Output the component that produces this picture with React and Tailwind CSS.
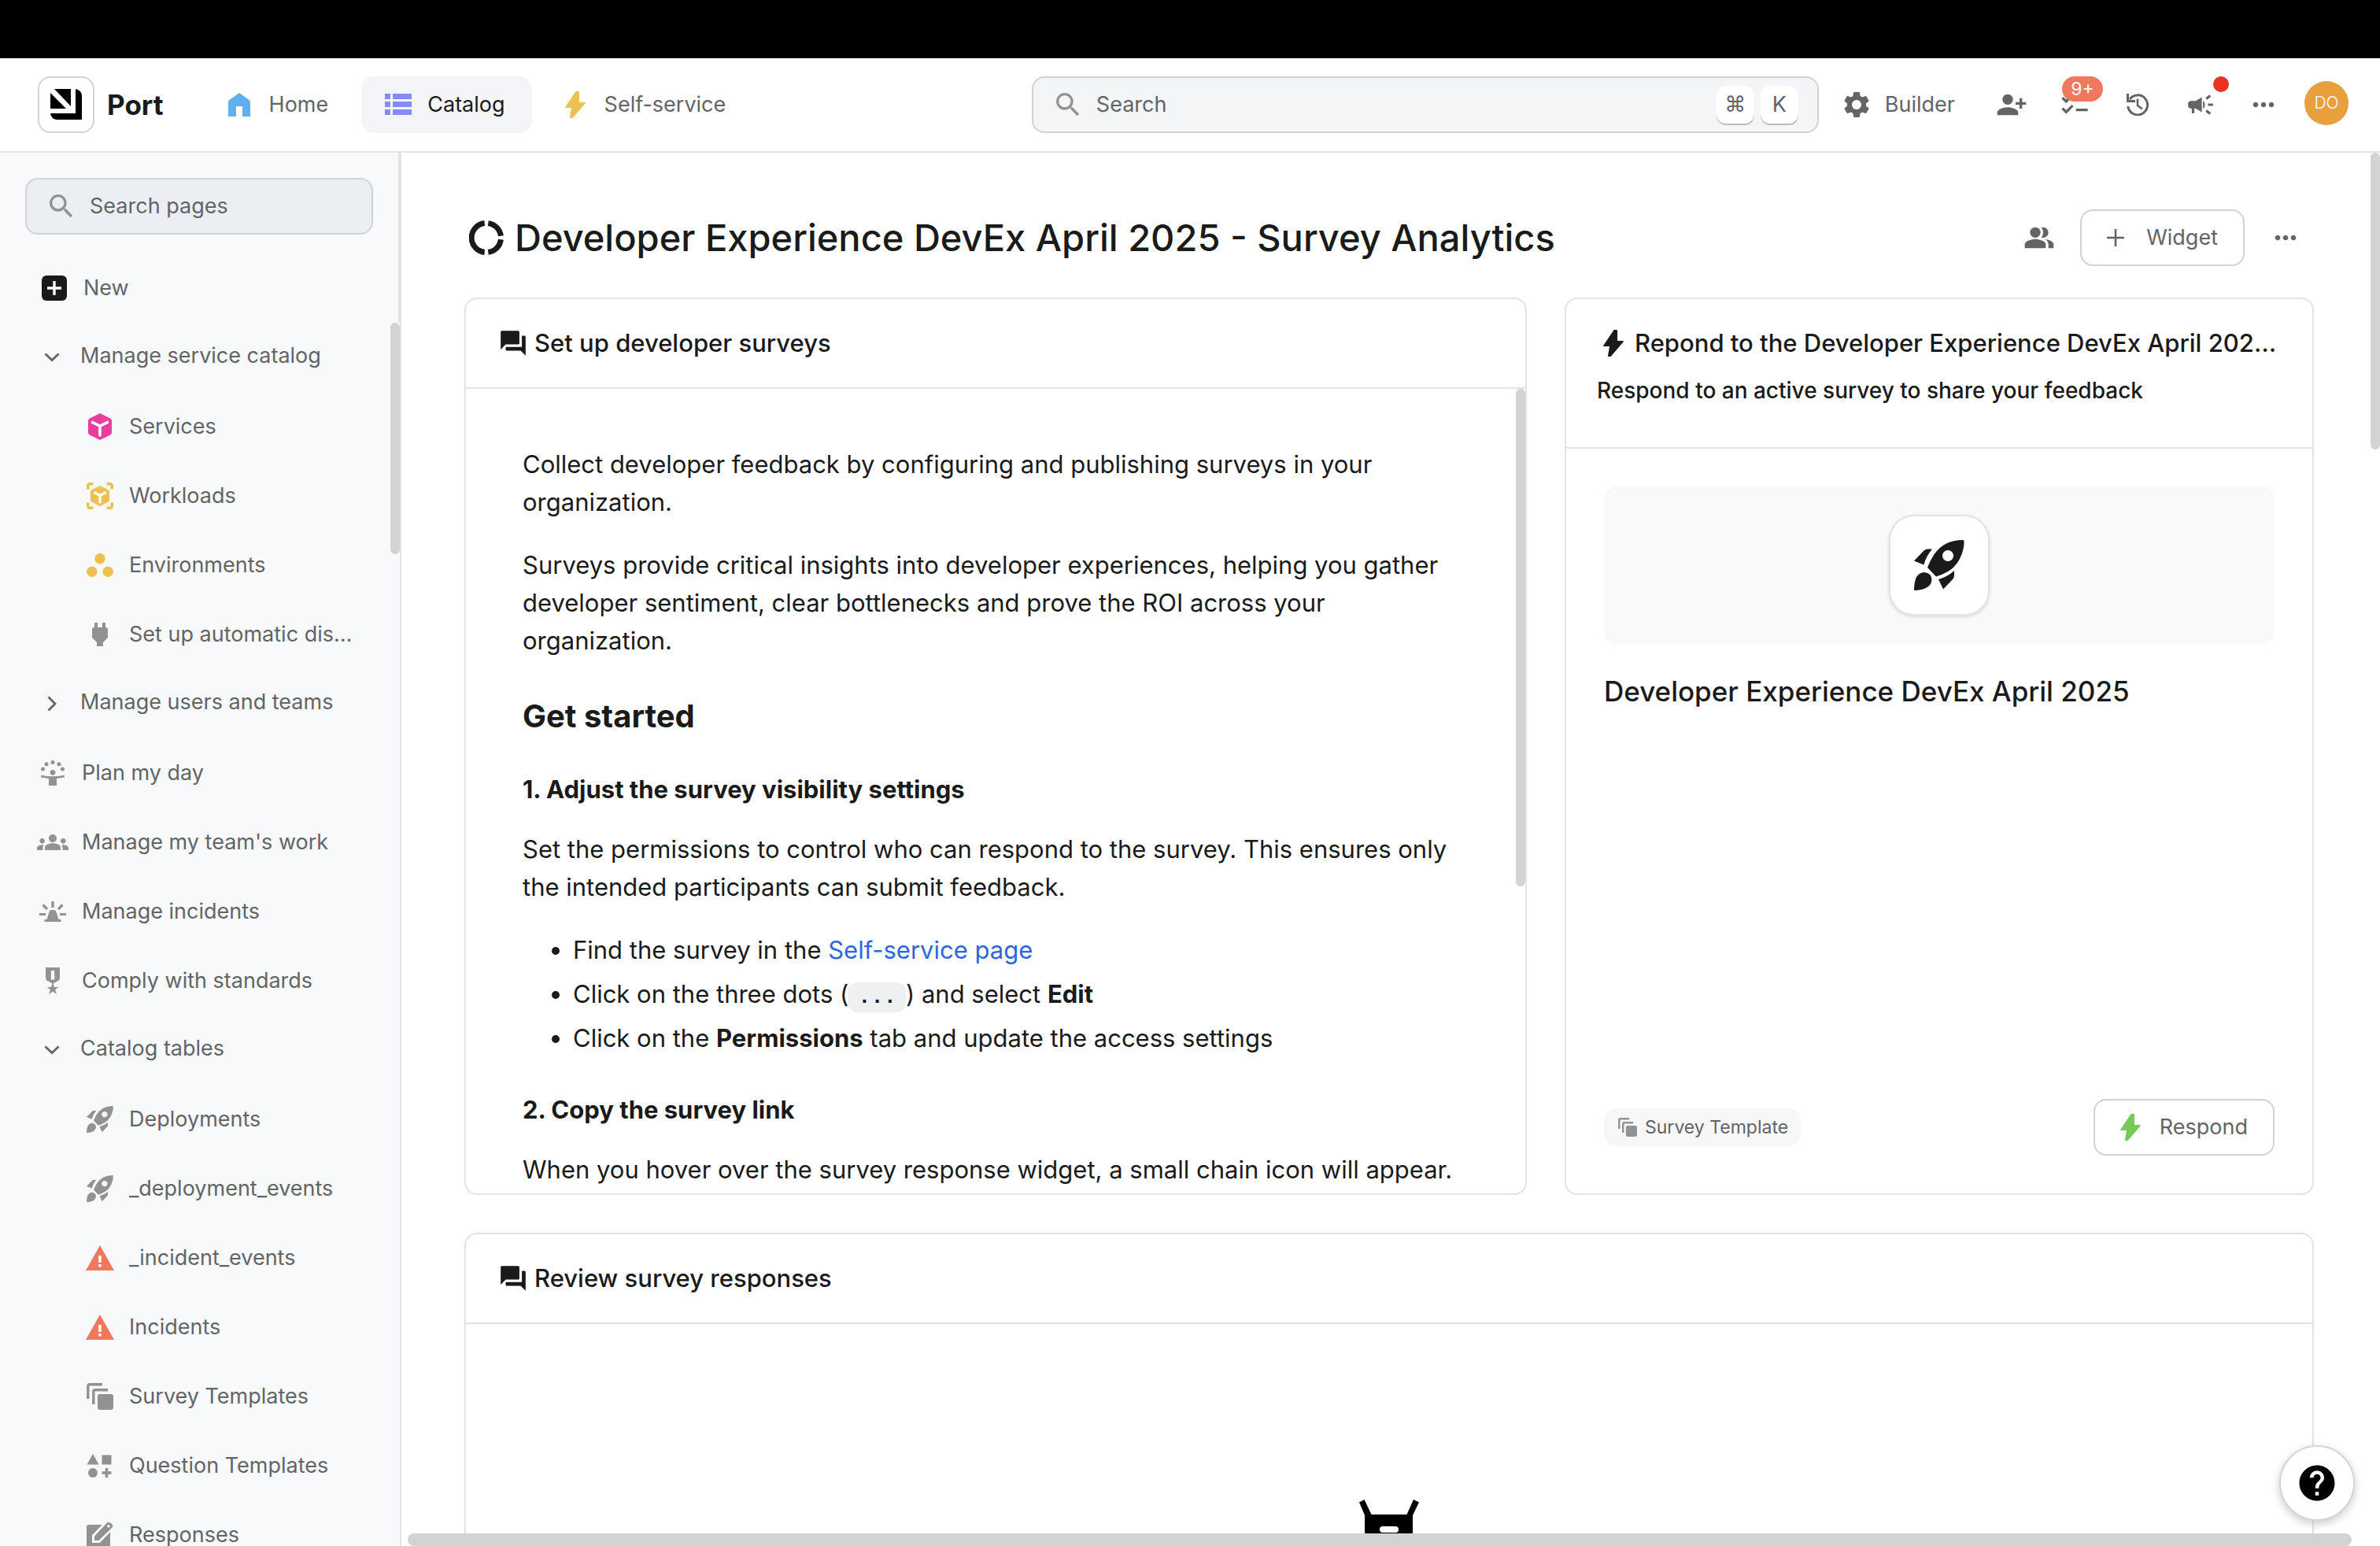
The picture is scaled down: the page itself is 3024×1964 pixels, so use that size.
import React from "react";
import {
  MdCampaign,
  MdChecklist,
  MdForum,
  MdGroups,
  MdHelp,
  MdMoreHoriz,
  MdPeopleAlt,
  MdPersonAddAlt1,
  MdSearch,
  MdSettings,
} from "react-icons/md";

/* ---------- icons ---------- */

const LogoIcon = () => (
  <svg width="40" height="40" viewBox="0 0 40 40" fill="#000" aria-hidden="true">
    <path d="M5 0h21v22z" />
    <path d="M0 5l20 20H0z" />
    <path d="M32 0q8 2 8 9v30H8q-7-1-8-8h32z" />
  </svg>
);

const HomeIcon = () => (
  <svg width="28" height="30" viewBox="0 0 28 30" fill="#5eb0ef" aria-hidden="true">
    <path d="M14 0l12.500 9q1.500 1 1.500 3v18H18V17h-8v13H0V12q0-2 1.500-3z" />
  </svg>
);

const ListIcon = () => (
  <svg width="34" height="28" viewBox="0 0 34 28" fill="#858af8" aria-hidden="true">
    {[0, 10, 20].map((y) => (
      <g key={y}>
        <rect y={y} width="7" height="7" />
        <rect x="10" y={y} width="24" height="7" />
      </g>
    ))}
  </svg>
);

const BoltIcon = ({ color, className = "" }) => (
  <svg width="26" height="34" viewBox="0 0 26 34" fill={color} className={className} aria-hidden="true">
    <path d="M13 1q0-1 1-1h3q1 0 1 1v13h7q1.500 0 .7 1.300L10.500 33q-.5 1-1.500 1H7q-1 0-1-1l2-12H1Q-.300 21 .300 19.700z" />
  </svg>
);

const HistoryIcon = () => (
  <svg width="28" height="28" viewBox="0 0 28 28" fill="none" stroke="currentColor" strokeWidth="3" aria-hidden="true">
    <path d="M1.700 16A12.500 12.500 0 1 0 4 7" />
    <path d="M1.500 0v9.500H11" />
    <path d="M14 6.500v8.500l6 4.500" strokeWidth="2.600" />
  </svg>
);

const PlusIcon = () => (
  <svg width="22" height="22" viewBox="0 0 22 22" stroke="currentColor" strokeWidth="2.600" aria-hidden="true">
    <path d="M11 0v22M0 11h22" />
  </svg>
);

const NewIcon = () => (
  <svg width="32" height="32" viewBox="0 0 32 32" aria-hidden="true">
    <rect width="32" height="32" rx="6" fill="#1a1a1a" />
    <path d="M16 7v18M7 16h18" stroke="#fff" strokeWidth="3.400" />
  </svg>
);

const ChevronDown = () => (
  <svg width="20" height="12" viewBox="0 0 20 12" fill="none" stroke="#636466" strokeWidth="2.800" aria-hidden="true">
    <path d="M1.500 1.500l8.500 8 8.500-8" />
  </svg>
);

const ChevronRight = () => (
  <svg width="12" height="20" viewBox="0 0 12 20" fill="none" stroke="#636466" strokeWidth="2.800" aria-hidden="true">
    <path d="M1.500 1.500l8.500 8.500-8.500 8.500" />
  </svg>
);

const CubeIcon = () => (
  <svg width="30" height="34" viewBox="0 0 30 34" aria-hidden="true">
    <path d="M15 0l13 6.500q2 1 2 3v15q0 2-2 3L15 34 2 27.500q-2-1-2-3v-15q0-2 2-3z" fill="#e93d9f" />
    <path d="M5.500 11.500L15 16.300l9.500-4.800M15 16.300V28" fill="none" stroke="#fff" strokeWidth="3.600" strokeLinecap="round" />
  </svg>
);

const WorkloadIcon = () => (
  <svg width="34" height="34" viewBox="0 0 34 34" aria-hidden="true">
    <g fill="none" stroke="#edc151" strokeWidth="3.600">
      <path d="M1.800 8.500V4Q1.800 1.800 4 1.800h4.500M25.500 1.800H30q2.200 0 2.200 2.200v4.500M32.200 25.500V30q0 2.200-2.200 2.200h-4.500M8.500 32.200H4q-2.200 0-2.200-2.200v-4.500" />
    </g>
    <path d="M17 4l10.500 5.300q1.500.7 1.500 2v11.400q0 1.300-1.500 2L17 30 6.500 24.700q-1.500-.7-1.500-2V11.300q0-1.300 1.500-2z" fill="#edc151" />
    <path d="M10.500 13l6.500 3.400 6.500-3.400M17 16.400V25" fill="none" stroke="#fff" strokeWidth="3.200" strokeLinecap="round" />
  </svg>
);

const DotsIcon = () => (
  <svg width="34" height="30" viewBox="0 0 34 30" fill="#edc151" aria-hidden="true">
    <circle cx="17" cy="6.700" r="6.700" />
    <circle cx="6.800" cy="23.200" r="6.700" />
    <circle cx="27.200" cy="23.200" r="6.700" />
  </svg>
);

const PlugIcon = () => (
  <svg width="20" height="30" viewBox="0 0 20 30" fill="#919294" aria-hidden="true">
    <path d="M3 0h4v6h6V0h4v6q3 0 3 3v10l-6 6v5H6v-5l-6-6V9q0-3 3-3z" />
  </svg>
);

const JuggleIcon = () => (
  <svg width="30" height="32" viewBox="0 0 30 32" fill="#919294" aria-hidden="true">
    <circle cx="15" cy="2.500" r="2.500" />
    <circle cx="7" cy="4.800" r="2.500" />
    <circle cx="23" cy="4.800" r="2.500" />
    <circle cx="2.500" cy="11" r="2.500" />
    <circle cx="27.500" cy="11" r="2.500" />
    <circle cx="15" cy="15.300" r="3.400" />
    <path d="M.5 18.800q14.500 3 29 0l.5 2.800q-5 1-10 1.400v9H10v-9q-5-.4-10-1.400z" />
  </svg>
);

const SirenIcon = () => (
  <svg width="34" height="26" viewBox="0 0 34 26" fill="#919294" aria-hidden="true">
    <path d="M9.500 23l3-9.500Q13 11 15 11h4q2 0 2.500 2.500l3 9.500z" />
    <path d="M6.500 23h21v3h-21zM0 15h8v3H0zM26 15h8v3h-8zM15.300 0h3.400v8h-3.400z" />
    <path d="M4.500 4.500l5.500 5.500M29.500 4.500L24 10" stroke="#919294" strokeWidth="3.200" />
  </svg>
);

const MedalIcon = () => (
  <svg width="18" height="34" viewBox="0 0 18 34" fill="#919294" aria-hidden="true">
    <path fillRule="evenodd" d="M0 0h18v13q0 3-3 4.500L10 20v3H8v-3l-5-2.500Q0 16 0 13zM6.800 4v11.500h4.400V4z" />
    <path d="M9 20l2 5h5.500l-4.400 3.300L14 34l-5-3.500L4 34l1.900-5.700L1.500 25H7z" />
  </svg>
);

const RocketIcon = ({ size = 34, color = "#919294" }) => (
  <svg width={size} height={size} viewBox="0 0 64 64" fill={color} aria-hidden="true">
    <path fillRule="evenodd" d="M62 0q1.500 0 1.500 1.500Q64 12 58 24 52 35 43 40 36 44 28 46.500L17 35q3-8 8-16Q31 10 40 5 50 0 62 0zM43 13a7 7 0 1 0 .01 0z" />
    <path d="M0 26.500L12 14q2.500-3 6-2.500h5Q15 21 12.400 31.500z" />
    <path d="M31 50q11-3 20-11v6q0 3-2 5L37 62.500z" />
    <path d="M0 64q0-11 3-17 4-6 10-6 9 1 9.500 9-.5 8-7.500 11-6 3-15 3z" />
  </svg>
);

const WarnIcon = () => (
  <svg width="36" height="32" viewBox="0 0 36 32" aria-hidden="true">
    <path d="M18 0l18 32H0z" fill="#ef785d" />
    <path d="M16.200 13h3.600v9h-3.600zM16.200 24h3.600v3.400h-3.600z" fill="#fff" />
  </svg>
);

const StackIcon = ({ size = 34 }) => (
  <svg width={size} height={size} viewBox="0 0 34 34" aria-hidden="true">
    <path d="M1.800 20V4Q1.800 1.800 4 1.800h16M8.800 27V11q0-2.200 2.200-2.200h16" fill="none" stroke="#919294" strokeWidth="3.400" />
    <rect x="14" y="14" width="20" height="20" rx="3" fill="#919294" />
  </svg>
);

const ShapesIcon = () => (
  <svg width="34" height="30" viewBox="0 0 34 30" fill="#919294" aria-hidden="true">
    <path d="M8 0l7.500 13.500H.5zM19.500 1.500h12v12h-12zM23.700 18h3.600v4.200h4.200v3.600h-4.200V30h-3.600v-4.200h-4.200v-3.600h4.200z" />
    <circle cx="8" cy="24" r="6" />
  </svg>
);

const EditIcon = () => (
  <svg width="34" height="34" viewBox="0 0 34 34" fill="#919294" aria-hidden="true">
    <rect y="4" width="30" height="30" rx="3" />
    <path d="M10 24v-5.500L25 3q2.500-2 5 .5t.5 5L15.500 24z" fill="#f8f9fb" stroke="#f8f9fb" strokeWidth="6" />
    <path d="M10 24v-5.500L25 2.500Q28-1 31.500 2.500T31.500 8.500L15.500 24z" />
    <circle cx="28" cy="5.800" r="1.800" fill="#f8f9fb" />
  </svg>
);

const DonutIcon = () => (
  <svg width="44" height="44" viewBox="0 0 44 44" fill="none" stroke="#1a1a1a" strokeWidth="7" aria-hidden="true">
    <path d="M19.700 3.600a18.500 18.500 0 0 0 0 36.800M24.300 3.600A18.500 18.500 0 0 1 40.400 19.700M40.400 24.300A18.500 18.500 0 0 1 24.300 40.400" />
  </svg>
);

const MascotIcon = () => (
  <svg width="76" height="120" viewBox="0 0 76 120" aria-hidden="true">
    <path d="M0 3.500L6.500 0 15.500 19h45L69 0l7 3.500L68 20v100H7V20z" fill="#000" />
    <rect x="26" y="34" width="24" height="8" rx="4" fill="#fff" />
  </svg>
);

/* ---------- data ---------- */

const pages = [
  { type: "group", label: "Manage service catalog", open: true },
  { type: "child", label: "Services", icon: <CubeIcon /> },
  { type: "child", label: "Workloads", icon: <WorkloadIcon /> },
  { type: "child", label: "Environments", icon: <DotsIcon /> },
  { type: "child", label: "Set up automatic discovery", icon: <PlugIcon /> },
  { type: "group", label: "Manage users and teams", open: false },
  { type: "page", label: "Plan my day", icon: <JuggleIcon /> },
  { type: "page", label: "Manage my team's work", icon: <MdGroups size={40} color="#919294" /> },
  { type: "page", label: "Manage incidents", icon: <SirenIcon /> },
  { type: "page", label: "Comply with standards", icon: <MedalIcon /> },
  { type: "group", label: "Catalog tables", open: true },
  { type: "child", label: "Deployments", icon: <RocketIcon /> },
  { type: "child", label: "_deployment_events", icon: <RocketIcon /> },
  { type: "child", label: "_incident_events", icon: <WarnIcon /> },
  { type: "child", label: "Incidents", icon: <WarnIcon /> },
  { type: "child", label: "Survey Templates", icon: <StackIcon /> },
  { type: "child", label: "Question Templates", icon: <ShapesIcon /> },
  { type: "child", label: "Responses", icon: <EditIcon /> },
];

/* ---------- layout parts ---------- */

function NavLink({ icon, label, active }) {
  return (
    <a
      href="#"
      className={
        active
          ? "flex h-[72px] items-center gap-5 rounded-2xl bg-[#f4f5f8] pr-[34px] pl-[30px] text-[#1a1a1a]"
          : "flex h-[72px] items-center gap-6 rounded-2xl px-[30px]"
      }
    >
      {icon}
      {label}
    </a>
  );
}

function IconButton({ label, children }) {
  return (
    <button type="button" aria-label={label} className="relative flex h-[72px] w-20 items-center justify-center">
      {children}
    </button>
  );
}

function Header() {
  return (
    <header className="flex h-[120px] shrink-0 items-center border-b-2 border-[#e2e3e3] bg-white pr-7 pl-12">
      <a href="#" className="flex items-center gap-4 text-[35px] font-bold text-[#1a1a1a]">
        <span className="flex size-[72px] items-center justify-center rounded-2xl border-2 border-[#d4d4d4]">
          <LogoIcon />
        </span>
        Port
      </a>
      <nav className="ml-[52px] flex items-center gap-3">
        <NavLink icon={<HomeIcon />} label="Home" />
        <NavLink icon={<ListIcon />} label="Catalog" active />
        <NavLink icon={<BoltIcon color="#edc151" />} label="Self-service" />
      </nav>
      <div className="ml-auto flex items-center">
        <div className="flex h-[72px] w-[1000px] items-center gap-4 rounded-2xl border-2 border-[#d2d2d2] bg-[#f4f5f7] px-6">
          <MdSearch size={40} color="#919294" />
          <input
            type="text"
            aria-label="Search"
            placeholder="Search"
            className="min-w-0 flex-1 bg-transparent outline-none placeholder:text-[#636466]"
          />
          <span className="flex gap-2">
            <kbd className="flex size-12 items-center justify-center rounded-xl bg-white font-['DejaVu_Sans',sans-serif] text-[27px] shadow-[0_2px_0_#bbbcbe]">
              ⌘
            </kbd>
            <kbd className="flex size-12 items-center justify-center rounded-xl bg-white font-[Inter,sans-serif] text-[27px] shadow-[0_2px_0_#bbbcbe]">
              K
            </kbd>
          </span>
        </div>
        <button type="button" className="ml-7 flex h-[72px] items-center gap-4 pr-8">
          <MdSettings size={40} />
          Builder
        </button>
        <IconButton label="Invite member">
          <MdPersonAddAlt1 size={40} />
        </IconButton>
        <IconButton label="Tasks">
          <MdChecklist size={40} />
          <span className="absolute top-0 left-6 flex h-8 w-[52px] items-center justify-center rounded-full bg-[#ef785d] text-[23px] text-white">
            9+
          </span>
        </IconButton>
        <IconButton label="History">
          <HistoryIcon />
        </IconButton>
        <IconButton label="Announcements">
          <MdCampaign size={38} />
          <span className="absolute top-0 right-1 size-5 rounded-full bg-[#ea3323]" />
        </IconButton>
        <IconButton label="More">
          <MdMoreHoriz size={40} />
        </IconButton>
        <button type="button" aria-label="Account" className="flex w-20 justify-center pb-1">
          <span className="flex size-14 items-center justify-center rounded-full bg-[#e8a03c] text-[21px] font-light text-white">DO</span>
        </button>
      </div>
    </header>
  );
}

function SidebarRow({ item }) {
  if (item.type === "group") {
    return (
      <button type="button" aria-expanded={item.open} className="flex h-[88px] items-center gap-[26px] pr-8 pl-14 text-left">
        <span className="flex w-5 justify-center">{item.open ? <ChevronDown /> : <ChevronRight />}</span>
        <span className="truncate pb-1">{item.label}</span>
      </button>
    );
  }
  return (
    <a
      href="#"
      className={item.type === "child" ? "flex h-[88px] items-center gap-[17px] pr-14 pl-[107px]" : "flex h-[88px] items-center gap-[17px] pr-8 pl-[47px]"}
    >
      <span className="flex w-10 shrink-0 justify-center">{item.icon}</span>
      <span className="truncate">{item.label}</span>
    </a>
  );
}

function Sidebar() {
  return (
    <aside className="relative flex w-[510px] shrink-0 flex-col border-r-2 border-[#e2e3e3] bg-[#f8f9fb]">
      <div className="flex h-[216px] shrink-0 flex-col justify-between border-r-2 border-[#e2e3e3] pt-8">
        <div className="mr-8 ml-8 flex h-[72px] items-center gap-4 rounded-2xl border-2 border-[#d2d2d2] bg-[#ebeff3] px-6">
          <MdSearch size={40} color="#919294" />
          <input
            type="text"
            aria-label="Search pages"
            placeholder="Search pages"
            className="min-w-0 flex-1 bg-transparent outline-none placeholder:text-[#636466]"
          />
        </div>
        <button type="button" className="flex h-[88px] items-center gap-[21px] pl-[53px]">
          <NewIcon />
          New
        </button>
      </div>
      <nav className="relative flex min-h-0 flex-1 flex-col overflow-hidden">
        {pages.map((item) => (
          <div key={item.label} className="flex shrink-0 flex-col">
            <SidebarRow item={item} />
          </div>
        ))}
        <span className="absolute top-0 right-0 h-[294px] w-3 rounded-full bg-[#d3d3d3]" />
      </nav>
    </aside>
  );
}

function CardTitle({ children }) {
  return (
    <header className="flex h-[114px] shrink-0 items-center gap-2 border-b-2 border-[#e2e3e3] px-[41px] text-[31px] font-medium">
      <MdForum size={38} />
      <h2>{children}</h2>
    </header>
  );
}

const cardClass = "flex flex-col overflow-hidden rounded-2xl border-2 border-[#e2e3e3] bg-white";

function SetupCard() {
  return (
    <section className={cardClass}>
      <CardTitle>Set up developer surveys</CardTitle>
      <div className="relative min-h-0 flex-1 overflow-hidden pt-[72px] pr-[84px] pl-[72px] text-[31px] leading-[48px]">
        <p>Collect developer feedback by configuring and publishing surveys in your organization.</p>
        <p className="mt-8">
          Surveys provide critical insights into developer experiences, helping you gather developer sentiment, clear
          bottlenecks and prove the ROI across your organization.
        </p>
        <h3 className="mt-12 text-[40px] font-bold">Get started</h3>
        <h4 className="mt-[45px] font-bold">1. Adjust the survey visibility settings</h4>
        <p className="mt-7">
          Set the permissions to control who can respond to the survey. This ensures only the intended participants can
          submit feedback.
        </p>
        <ul className="mt-8 flex list-disc flex-col gap-2 pl-16">
          <li>
            Find the survey in the{" "}
            <a href="#" className="text-[#2e66dc]">
              Self-service page
            </a>
          </li>
          <li>
            Click on the three dots (
            <code className="rounded-xl bg-[#eff0f2] px-3 py-1 font-['Liberation_Mono',monospace] text-[27px] leading-none font-bold">...</code>
            ) and select <strong className="font-bold">Edit</strong>
          </li>
          <li>
            Click on the <strong className="font-bold">Permissions</strong> tab and update the access settings
          </li>
        </ul>
        <h4 className="mt-[43px] font-bold">2. Copy the survey link</h4>
        <p className="mt-7">When you hover over the survey response widget, a small chain icon will appear.</p>
        <span className="absolute top-0 right-0 h-[632px] w-3 rounded-full bg-[#d3d3d3]" />
      </div>
    </section>
  );
}

function RespondCard() {
  return (
    <section className={cardClass}>
      <header className="flex h-[190px] shrink-0 flex-col gap-5 border-b-2 border-[#e2e3e3] px-[39px] pt-8 font-medium">
        <div className="flex h-12 items-center gap-[14px] pl-2 text-[31px]">
          <BoltIcon color="#1a1a1a" className="shrink-0" />
          <h2 className="truncate">Repond to the Developer Experience DevEx April 2025 - Survey</h2>
        </div>
        <p className="text-[28px] leading-8">Respond to an active survey to share your feedback</p>
      </header>
      <div className="flex flex-1 flex-col px-12 py-12">
        <div className="flex h-[200px] shrink-0 items-center justify-center rounded-2xl bg-[#f8f9fb]">
          <span className="flex size-32 items-center justify-center rounded-[32px] border-2 border-[#e2e3e3] bg-white shadow-[0_2px_4px_rgba(0,0,0,0.12)]">
            <RocketIcon size={64} color="#1a1a1a" />
          </span>
        </div>
        <h3 className="mt-9 text-[35px] leading-[48px] font-medium">Developer Experience DevEx April 2025</h3>
        <div className="mt-auto flex items-center justify-between text-[#636466]">
          <span className="flex h-12 items-center gap-[10px] rounded-2xl bg-[#f7f7f7] pr-4 pl-[18px] text-[23px]">
            <StackIcon size={24} />
            Survey Template
          </span>
          <button type="button" className="flex h-[72px] items-center gap-6 rounded-2xl border-2 border-[#d2d2d2] px-8 text-[27px]">
            <BoltIcon color="#74c957" />
            Respond
          </button>
        </div>
      </div>
    </section>
  );
}

function ReviewCard() {
  return (
    <section className={`${cardClass} col-span-2`}>
      <CardTitle>Review survey responses</CardTitle>
      <div className="flex flex-1 justify-center pt-[223px]">
        <MascotIcon />
      </div>
    </section>
  );
}

export default function App() {
  return (
    <div className="flex h-screen flex-col overflow-hidden bg-white font-[Inter,sans-serif] text-[27px] text-[#636466]">
      <div className="h-[74px] shrink-0 bg-black" />
      <Header />
      <div className="flex min-h-0 flex-1">
        <Sidebar />
        <main className="relative min-w-0 flex-1 overflow-hidden pr-[84px] pl-20 text-[#1a1a1a]">
          <div className="flex h-[184px] items-center pt-8">
            <h1 className="flex items-center gap-[14px] pl-[6px] text-[47px] font-medium">
              <DonutIcon />
              Developer Experience DevEx April 2025 - Survey Analytics
            </h1>
            <div className="-mr-1 ml-auto flex items-center text-[#636466]">
              <IconButton label="Members">
                <MdPeopleAlt size={40} />
              </IconButton>
              <button type="button" className="mx-3 flex h-[72px] items-center gap-7 rounded-2xl border-2 border-[#d2d2d2] px-8">
                <PlusIcon />
                Widget
              </button>
              <IconButton label="More options">
                <MdMoreHoriz size={40} />
              </IconButton>
            </div>
          </div>
          <div className="grid grid-cols-[1350fr_952fr] grid-rows-[1140px_860px] gap-12">
            <SetupCard />
            <RespondCard />
            <ReviewCard />
          </div>
          <span className="absolute top-0 right-0 h-[377px] w-3 rounded-full bg-[#d3d3d3]" />
          <span className="absolute right-9 bottom-0 left-2 h-4 rounded-full bg-[#d3d3d3]" />
          <button
            type="button"
            aria-label="Help"
            className="absolute right-8 bottom-8 flex size-24 items-center justify-center rounded-full border-2 border-[#d4d4d4] bg-white text-black shadow-[0_4px_12px_rgba(0,0,0,0.2)]"
          >
            <MdHelp size={54} />
          </button>
        </main>
      </div>
    </div>
  );
}
